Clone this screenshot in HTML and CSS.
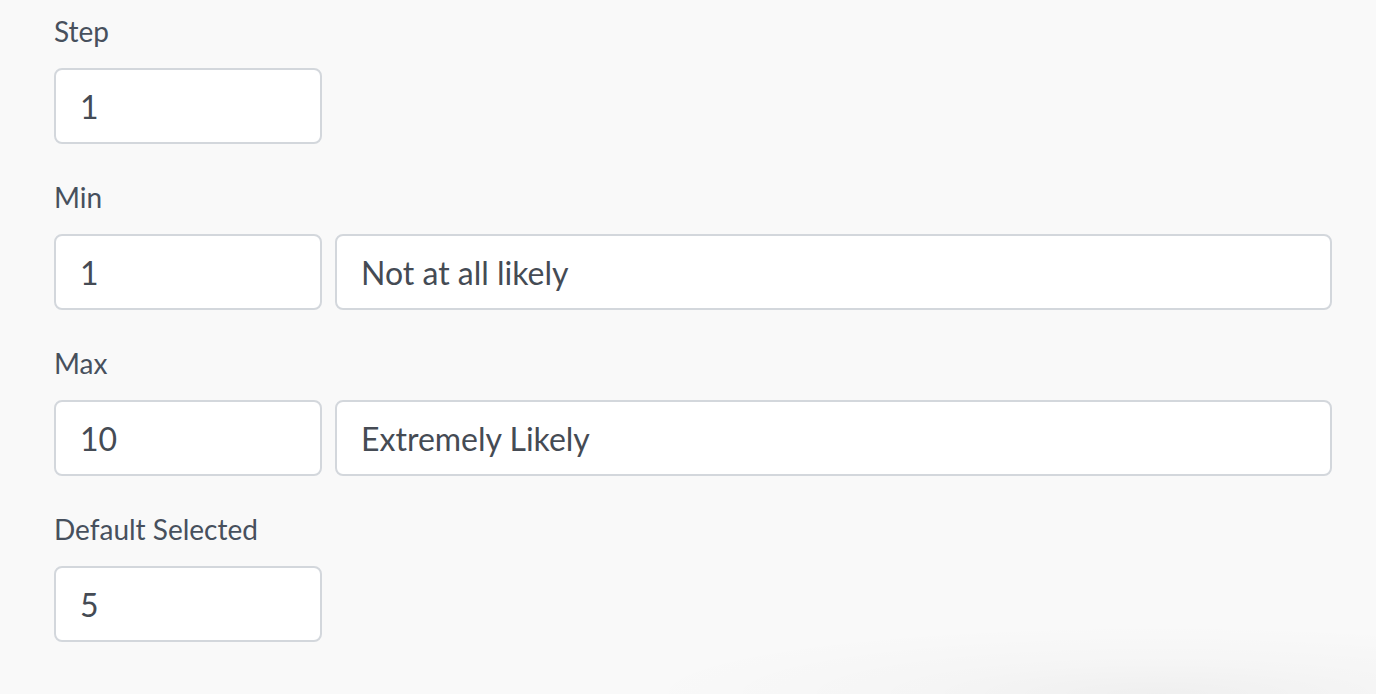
FILE: index.html
```html
<!DOCTYPE html>
<html>
<head>
<meta charset="utf-8">
<link rel="stylesheet" href="styles.css">
</head>
<body>
<div class="form">
  <div class="group">
    <label class="label">Step</label>
    <div class="row">
      <input class="field small" type="text" value="1">
    </div>
  </div>
  <div class="group">
    <label class="label">Min</label>
    <div class="row">
      <input class="field small" type="text" value="1">
      <input class="field wide" type="text" value="Not at all likely">
    </div>
  </div>
  <div class="group">
    <label class="label">Max</label>
    <div class="row">
      <input class="field small" type="text" value="10">
      <input class="field wide" type="text" value="Extremely Likely">
    </div>
  </div>
  <div class="group">
    <label class="label">Default Selected</label>
    <div class="row">
      <input class="field small" type="text" value="5">
    </div>
  </div>
</div>
<div class="shade"></div>
</body>
</html>
```
FILE: styles.css
```css
html, body {
  margin: 0;
  padding: 0;
  height: 100%;
  overflow: hidden;
}
body {
  background: #f9f9f9;
  font-family: Lato, "Noto Sans", sans-serif;
  position: relative;
}
.form {
  width: 1278px;
  margin-left: 54px;
  padding-top: 13px;
  display: flex;
  flex-direction: column;
  gap: 35px;
}
.group {
  display: flex;
  flex-direction: column;
  gap: 19px;
}
.label {
  display: block;
  font-size: 28px;
  line-height: 36px;
  color: #47505d;
}
.row {
  display: flex;
  gap: 13px;
}
.field {
  box-sizing: border-box;
  height: 76px;
  border: 2px solid #d3d7dc;
  border-radius: 8px;
  background: #fff;
  padding: 0 24px;
  font-family: Lato, "Noto Sans", sans-serif;
  font-size: 32px;
  color: #454b54;
  outline: none;
  margin: 0;
}
.small {
  width: 268px;
  flex: none;
}
.wide {
  flex: 1;
  min-width: 0;
}
.shade {
  position: absolute;
  left: 500px;
  right: 0;
  bottom: 0;
  height: 70px;
  background: radial-gradient(ellipse 60% 100% at 75% 100%, rgba(0,0,0,0.04) 0%, rgba(0,0,0,0.015) 45%, rgba(0,0,0,0) 100%);
  pointer-events: none;
}
```
